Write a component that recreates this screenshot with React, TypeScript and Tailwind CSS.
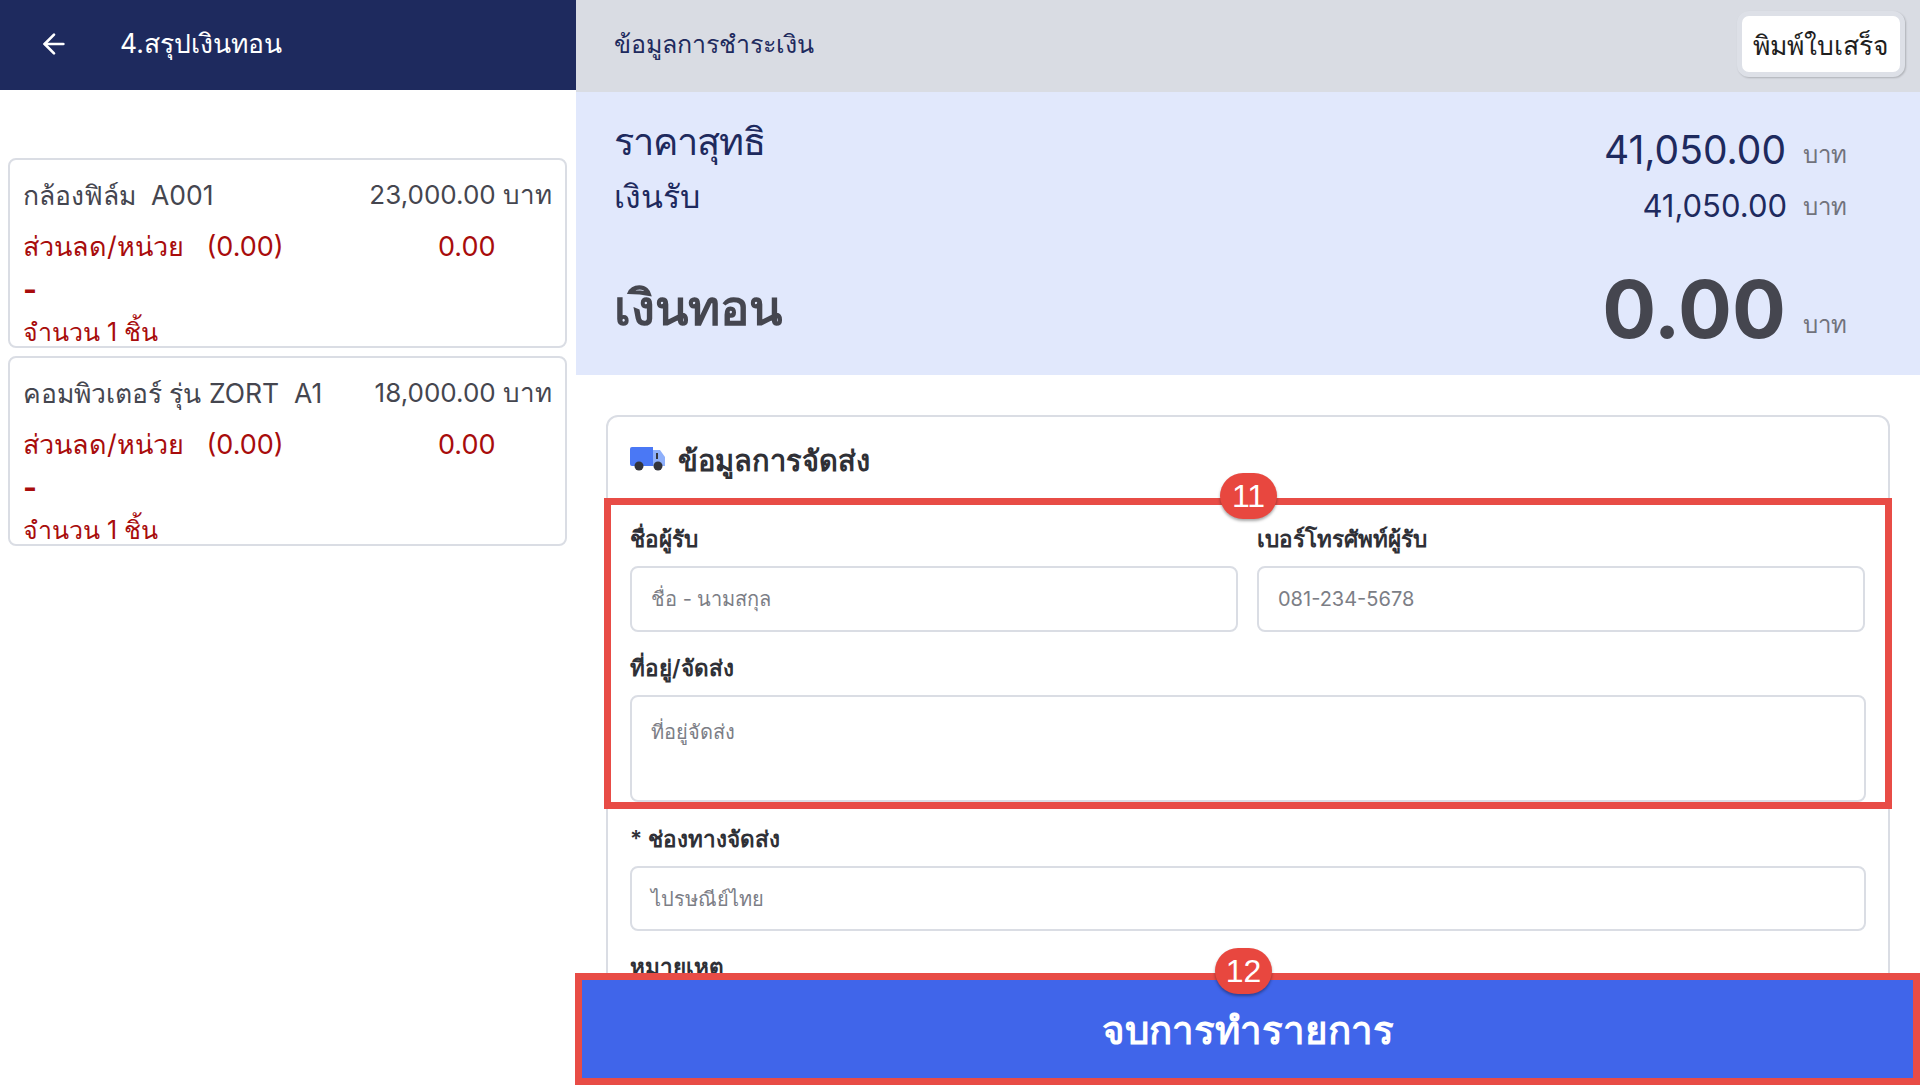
import { ArrowLeft } from "lucide-react";

const items = [
  { name: "กล้องฟิล์ม  A001", price: "23,000.00 บาท" },
  { name: "คอมพิวเตอร์ รุ่น ZORT  A1", price: "18,000.00 บาท" },
];

const ItemCard = ({ name, price }: { name: string; price: string }) => (
  <div className="h-[190px] overflow-hidden rounded-lg border-2 border-[#dadde4] bg-white px-[13px] pt-[17px] text-[26px] leading-[36px]">
    <div className="flex justify-between whitespace-pre text-[#45464f]">
      <span className="text-[26.5px]">{name}</span>
      <span>{price}</span>
    </div>
    <div className="mt-[16px] flex whitespace-pre text-[27px] text-[#a80c0c]">
      <span className="w-[415px]">ส่วนลด/หน่วย   (0.00)</span>
      <span>0.00</span>
    </div>
    <div className="mt-[6px] text-[30px] font-bold text-[#a80c0c]">-</div>
    <div className="mt-[7px] text-[25px] text-[#a80c0c]">จำนวน 1 ชิ้น</div>
  </div>
);

const Field = ({ label, placeholder, className }: { label: string; placeholder: string; className: string }) => (
  <div>
    <div className="text-[22.5px] leading-[30px] font-semibold text-[#2f3036]">{label}</div>
    <div className={`mt-[12px] rounded-lg border-2 border-[#dadde4] bg-white px-[19px] text-[20px] leading-[28px] text-[#7c7e86] ${className}`}>
      {placeholder}
    </div>
  </div>
);

const Badge = ({ value, className }: { value: string; className: string }) => (
  <div className={`absolute z-10 flex h-[46px] w-[57px] items-center justify-center rounded-full bg-[#e8473f] text-[32px] text-white shadow-[0_2px_3px_rgba(0,0,0,0.35)] font-['Liberation_Sans',sans-serif] ${className}`}>
    {value}
  </div>
);

export default function App() {
  return (
    <div className="flex h-[1085px] w-[1920px] overflow-hidden bg-white font-['Inter','Noto_Sans',sans-serif]">
      <div className="w-[576px] shrink-0">
        <div className="flex h-[90px] items-center bg-[#1e2a5e] pb-[2px] pl-[38px] text-white">
          <ArrowLeft size={32} strokeWidth={2} />
          <span className="ml-[50px] text-[26.5px]">4.สรุปเงินทอน</span>
        </div>
        <div className="ml-[8px] mt-[68px] flex w-[559px] flex-col gap-[8px]">
          {items.map((item) => (
            <ItemCard key={item.name} name={item.name} price={item.price} />
          ))}
        </div>
      </div>

      <div className="relative flex min-w-0 flex-1 flex-col">
        <div className="flex h-[92px] shrink-0 items-start justify-between bg-[#d9dce3] pl-[38px] pr-[15px]">
          <span className="mt-[26px] text-[25px] text-[#1e2a5e]">ข้อมูลการชำระเงิน</span>
          <button className="mt-[11px] flex h-[66px] w-[168px] items-center justify-center rounded-xl border-[5px] border-[#dde0e7] bg-white pt-[3px] text-[26.5px] text-[#1f1f1f] shadow-[1px_1px_2px_rgba(0,0,0,0.2)]">
            พิมพ์ใบเสร็จ
          </button>
        </div>

        <div className="flex h-[283px] shrink-0 justify-between bg-[#e1e8fc] pl-[38px] pr-[73px]">
          <div className="text-[#1e2a5e]">
            <div className="mt-[21px] text-[38px] leading-[56px] tracking-[-1px]">ราคาสุทธิ</div>
            <div className="mt-[6px] text-[32px] leading-[44px]">เงินรับ</div>
            <div className="mt-[54px] text-[49px] leading-[70px] font-bold text-[#45464f]">เงินทอน</div>
          </div>
          <div className="flex flex-col items-end">
            <div className="mt-[32px] flex items-baseline">
              <span className="text-[39px] leading-[52px] text-[#1e2a5e]">41,050.00</span>
              <span className="ml-[17px] -translate-y-[1px] text-[24px] text-[#71737c]">บาท</span>
            </div>
            <div className="mt-[8px] flex items-baseline">
              <span className="text-[31px] leading-[44px] text-[#1e2a5e]">41,050.00</span>
              <span className="ml-[16px] -translate-y-[2px] text-[24px] text-[#71737c]">บาท</span>
            </div>
            <div className="mt-[33px] flex items-baseline">
              <span className="text-[80px] leading-[96px] font-bold text-[#45464f]">0.00</span>
              <span className="ml-[17px] -translate-y-[5px] text-[24px] text-[#71737c]">บาท</span>
            </div>
          </div>
        </div>

        <div className="min-h-0 flex-1 overflow-hidden px-[30px] pt-[40px]">
          <div className="relative h-[700px] rounded-t-xl border-2 border-[#dadde4] px-[22px]">
            <div className="flex h-[84px] items-center gap-[12px]">
              <svg width="36" height="24" viewBox="0 0 36 24" aria-hidden="true">
                <path d="M0 2a2 2 0 0 1 2-2h21v19H2a2 2 0 0 1-2-2z" fill="#4a78f5" />
                <path d="M23 3h7l5 7v9H23z" fill="#8fb0fb" />
                <path d="M26 6h2v6h-2z" fill="#34353c" />
                <circle cx="9" cy="19" r="4.5" fill="#33343b" />
                <circle cx="28" cy="19" r="4.5" fill="#33343b" />
              </svg>
              <span className="pt-[3px] text-[29px] font-bold text-[#2f3036]">ข้อมูลการจัดส่ง</span>
            </div>

            <div className="grid grid-cols-[608px_608px] gap-x-[19px] pt-[23px]">
              <Field label="ชื่อผู้รับ" placeholder="ชื่อ - นามสกุล" className="flex h-[66px] items-center" />
              <Field label="เบอร์โทรศัพท์ผู้รับ" placeholder="081-234-5678" className="flex h-[66px] items-center" />
            </div>
            <div className="mt-[21px]">
              <Field label="ที่อยู่/จัดส่ง" placeholder="ที่อยู่จัดส่ง" className="h-[107px] pt-[21px]" />
            </div>
            <div className="mt-[22px]">
              <Field label="* ช่องทางจัดส่ง" placeholder="ไปรษณีย์ไทย" className="flex h-[65px] items-center" />
            </div>
            <div className="mt-[21px] text-[22.5px] leading-[30px] font-semibold text-[#2f3036]">หมายเหตุ</div>

            {/* annotation box 11 */}
            <div className="absolute left-[-4px] top-[81px] h-[311px] w-[1288px] border-[7px] border-[#e84c46]" />
            <Badge value="11" className="left-[612px] top-[56px]" />
          </div>
        </div>

        <button className="relative -ml-px h-[112px] w-[calc(100%+1px)] shrink-0 border-[7px] border-[#e84c46] bg-[#4065ea] pt-[3px] text-[38.5px] font-bold text-white">
          จบการทำรายการ
        </button>
        <Badge value="12" className="left-[639px] top-[948px]" />
      </div>
    </div>
  );
}
